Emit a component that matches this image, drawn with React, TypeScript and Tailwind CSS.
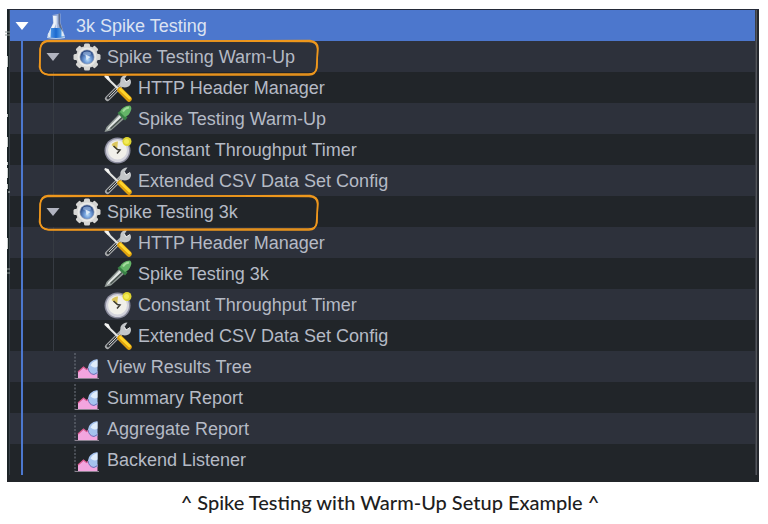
import React, { useState } from "react"

type IconName = "flask" | "gear" | "tools" | "dropper" | "clock" | "chart"

interface TreeNode {
  id: string
  label: string
  icon: IconName
  outlined?: boolean
  children?: TreeNode[]
}

interface FlatNode extends TreeNode {
  depth: number
}

const plan: TreeNode = {
  id: "plan",
  label: "3k Spike Testing",
  icon: "flask",
  children: [
    {
      id: "warmup",
      label: "Spike Testing Warm-Up",
      icon: "gear",
      outlined: true,
      children: [
        { id: "warmup-header", label: "HTTP Header Manager", icon: "tools" },
        { id: "warmup-sampler", label: "Spike Testing Warm-Up", icon: "dropper" },
        { id: "warmup-timer", label: "Constant Throughput Timer", icon: "clock" },
        { id: "warmup-csv", label: "Extended CSV Data Set Config", icon: "tools" }
      ]
    },
    {
      id: "spike",
      label: "Spike Testing 3k",
      icon: "gear",
      outlined: true,
      children: [
        { id: "spike-header", label: "HTTP Header Manager", icon: "tools" },
        { id: "spike-sampler", label: "Spike Testing 3k", icon: "dropper" },
        { id: "spike-timer", label: "Constant Throughput Timer", icon: "clock" },
        { id: "spike-csv", label: "Extended CSV Data Set Config", icon: "tools" }
      ]
    },
    { id: "tree", label: "View Results Tree", icon: "chart" },
    { id: "summary", label: "Summary Report", icon: "chart" },
    { id: "aggregate", label: "Aggregate Report", icon: "chart" },
    { id: "backend", label: "Backend Listener", icon: "chart" }
  ]
}

const indents = ["pl-0", "pl-[31px]", "pl-[62px]"]

function flatten(node: TreeNode, closed: string[], depth = 0): FlatNode[] {
  const rest = closed.includes(node.id) ? [] : node.children || []
  return [{ ...node, depth }, ...rest.flatMap((child) => flatten(child, closed, depth + 1))]
}

function FlaskIcon() {
  return (
    <svg viewBox="0 0 28 28" className="h-7 w-7">
      <defs>
        <linearGradient id="flask-liquid" x1="0" x2="1">
          <stop offset="0" stopColor="#63a9ee" />
          <stop offset="0.5" stopColor="#1b69cf" />
          <stop offset="1" stopColor="#6fb6f2" />
        </linearGradient>
      </defs>
      <path d="M10.500 3l8-1.500v9L23 24.500H5L11 11z" fill="#a9b9d9" opacity="0.85" />
      <path d="M11 4h3v8L9 23H5.500L11.500 11z" fill="#eef3fa" />
      <path d="M16.500 1.500h1.500v9l3 9-2 1-2.500-9z" fill="#5f6d8b" />
      <path d="M14.500 4v12" stroke="#cfdbee" strokeWidth="1.500" />
      <path d="M9 16h9.500L22 24.500q-7.500 3-16 0z" fill="url(#flask-liquid)" />
      <path d="M9 16l-3.500 8.500 3 1z M19.500 17l3 7-3 .5z" fill="#dfeaf6" />
      <path d="M5 24.500q9 3 18 0v1.500q-9 2-18 0z" fill="#b6cce8" />
    </svg>
  )
}

function GearIcon() {
  return (
    <svg viewBox="0 0 28 28" className="h-7 w-7">
      <defs>
        <radialGradient id="gear-core" cx="0.55" cy="0.7" r="0.65">
          <stop offset="0" stopColor="#b9dcf8" />
          <stop offset="0.4" stopColor="#6e9bd8" />
          <stop offset="1" stopColor="#23417c" />
        </radialGradient>
      </defs>
      <g fill="#d6d6d4">
        <circle cx="14" cy="14" r="11" />
        <rect x="11" y="0.500" width="6" height="27" rx="1.500" />
        <rect x="0.500" y="11" width="27" height="6" rx="1.500" />
        <rect x="11" y="0.500" width="6" height="27" rx="1.500" transform="rotate(45 14 14)" />
        <rect x="11" y="0.500" width="6" height="27" rx="1.500" transform="rotate(-45 14 14)" />
      </g>
      <circle cx="14" cy="14" r="9.500" fill="#e9e9e7" />
      <circle cx="14" cy="14" r="7.500" fill="#9ea9bd" />
      <circle cx="14" cy="14" r="6.800" fill="url(#gear-core)" />
      <ellipse cx="14" cy="10.500" rx="4" ry="2" fill="#93b0dc" opacity="0.7" />
      <path d="M12.500 11.500l5 2.500-4 3z" fill="#e9f3fc" opacity="0.85" />
    </svg>
  )
}

function ToolsIcon() {
  return (
    <svg viewBox="0 0 28 28" className="h-7 w-7">
      <path d="M3.500 24.500L19 9" stroke="#a9abad" strokeWidth="5" strokeLinecap="round" />
      <path d="M4 24L14 14" stroke="#33373b" strokeWidth="2.800" strokeLinecap="round" />
      <path d="M5 23L18 10" stroke="#c9cbcc" strokeWidth="1" />
      <path
        d="M16 11.500L16.500 5q2-4.500 7-4.500L20.500 5l1.500 3 4.500-2.500q1.500 4.500-2 7-3.500 1.500-6 .5z"
        fill="#c4c7c9"
      />
      <path d="M20.500 5l1.500 3 4-2.500" stroke="#f4f4f4" fill="none" />
      <path d="M1.500 2.500L15 15.500" stroke="#e2e3e1" strokeWidth="2.200" strokeLinecap="round" />
      <path d="M0.500 1l4 1 2 4-3-.5z" fill="#f6f6f4" />
      <path d="M16 16L25 25" stroke="#dfa10e" strokeWidth="5.500" strokeLinecap="round" />
      <path d="M16.500 15.500L25.500 24" stroke="#ffd52b" strokeWidth="2.800" strokeLinecap="round" />
    </svg>
  )
}

function DropperIcon() {
  return (
    <svg viewBox="0 0 28 28" className="h-7 w-7">
      <path d="M0.500 27l2-5L15.500 8.500l5 5L7 25.500z" fill="#8f9894" />
      <path d="M2.500 25.500l2-3.500L15.500 10.500l2 2L6 23z" fill="#e3e7e5" />
      <path d="M6.500 23.500L18 12.500" stroke="#49534f" strokeWidth="1.500" />
      <path d="M13.500 8l3-2.500 7 7-2.500 3z" fill="#398246" />
      <path d="M16 7q2-6 10-6.500 2.500 2 .5 6-1.500 4-5.500 5.500z" fill="#64b568" />
      <path d="M19 6.500q2-3.500 6-4" stroke="#a4dc9c" strokeWidth="2" fill="none" />
    </svg>
  )
}

function ClockIcon() {
  return (
    <svg viewBox="0 0 28 28" className="h-7 w-7">
      <circle cx="13.500" cy="14.500" r="13" fill="#8b8c9e" />
      <circle cx="13.500" cy="14.500" r="11.500" fill="#d3d3dc" />
      <circle cx="13.500" cy="14" r="9.500" fill="#f1f0ea" />
      <path d="M13 14L7.500 9q2-3.500 6.500-3.500z" fill="#dcc65c" />
      <path d="M9.500 10l4 3.500 2.500.5-3 3.500" stroke="#3c3b35" strokeWidth="1.500" fill="none" />
      <circle cx="23" cy="5.500" r="4.500" fill="#e0d530" />
      <circle cx="22.500" cy="5.500" r="2.500" fill="#f3ec58" />
    </svg>
  )
}

function ChartIcon() {
  return (
    <svg viewBox="0 0 28 28" className="h-7 w-7">
      <path d="M2 0v26" stroke="#747a84" strokeDasharray="2 1.500" />
      <path d="M2 25.500h24" stroke="#8d8391" />
      <path d="M5 25v-6l5.500-5 3 2.500 4-3 7 5V25z" fill="#f3a5df" />
      <path d="M5 19l5.500-5 3 2.500 3-2" stroke="#d9598f" strokeWidth="1.200" fill="none" />
      <path d="M15 14.500q.5-7 9.500-8.500v14.500q-1 1.500-4 .5-5-1-5.500-6.500z" fill="#a5c2ee" />
      <path d="M17.500 12.500q1.500-4 7-5.500v6.500q-3 2.500-7-1z" fill="#e0edfb" />
      <path d="M15 15q1 6 6 6.500l3.500-2" stroke="#6b6fb8" fill="none" />
    </svg>
  )
}

const icons: Record<IconName, () => React.JSX.Element> = {
  flask: FlaskIcon,
  gear: GearIcon,
  tools: ToolsIcon,
  dropper: DropperIcon,
  clock: ClockIcon,
  chart: ChartIcon
}

// Hand drawn frame around a thread group
function Outline() {
  return (
    <svg
      viewBox="0 0 282 38"
      fill="none"
      stroke="#ee971d"
      className="pointer-events-none absolute -top-0.5 left-7 z-10 h-[38px] w-[282px]"
    >
      <path
        d="M10 1.500L270 2.500Q279 2 279.500 10L279 29Q278 35 270 35L10 35.500Q2 35 2 27V10Q3 2 10 1.500"
        strokeWidth="1.500"
      />
      <path
        d="M8 2.500L272 1.500Q280 3 280 9L278.500 28Q278 36 271 36L11 36Q3 35 1.500 28L2.500 9Q3 3 12 2"
        strokeWidth="1.500"
      />
    </svg>
  )
}

interface TreeRowProps {
  node: FlatNode
  open: boolean
  onToggle: (id: string) => void
}

function TreeRow({ node, open, onToggle }: TreeRowProps) {
  const Icon = icons[node.icon]
  const isRoot = node.depth === 0

  return (
    <li
      role="treeitem"
      aria-level={node.depth + 1}
      aria-selected={isRoot}
      className={`relative flex h-[31px] items-center ${indents[node.depth]} ${
        isRoot ? "bg-[#4c77cd] text-[#dce3f2]" : "text-[#b5bac5] odd:bg-[#212529] even:bg-[#2d313b]"
      }`}
    >
      {!isRoot && <span className="absolute inset-y-0 left-[11px] w-0.5 bg-[#4c78cf]" />}
      {node.depth === 2 && <span className="absolute inset-y-0 left-[43px] w-px bg-[#363b42]" />}
      {node.children ? (
        <button
          type="button"
          aria-label={`Toggle ${node.label}`}
          aria-expanded={open}
          onClick={() => onToggle(node.id)}
          className="mr-2 flex w-6 justify-center"
        >
          <svg viewBox="0 0 14 8" className={`h-2 w-3.5 ${open ? "" : "-rotate-90"}`}>
            <path d="M0.500 0h13L7 8z" fill={isRoot ? "#ffffff" : "#b1b4c0"} />
          </svg>
        </button>
      ) : (
        <span className="mr-2 w-6" />
      )}
      <Icon />
      <span className="ml-1.5 whitespace-nowrap">{node.label}</span>
      {node.outlined && <Outline />}
    </li>
  )
}

export default function App() {
  const [closed, setClosed] = useState<string[]>([])

  const toggle = (id: string) =>
    setClosed((ids) => (ids.includes(id) ? ids.filter((item) => item !== id) : [...ids, id]))

  return (
    <main className="min-h-screen bg-white pt-[9px] pr-[9px] pl-[7px]">
      <div className="relative flex border-t border-[#242a38] bg-[#212529] pb-[7px]">
        <div className="w-[3px] border-r border-[#394047] bg-[#1b2427]" />
        {/* clipped edge of the window behind */}
        <svg viewBox="0 0 5 300" className="absolute top-0 -left-0.5 h-[300px] w-[5px]">
          <path d="M0 22h5M0 25h5M2 259h3M2 263h3" stroke="#8d9795" />
          <path
            d="M2.500 46v11M2.500 104v3M2.500 127v10M2.500 152v3M2.500 158v10M2.500 174v5M4 181v2M2.500 228v11"
            stroke="#c8cdcc"
          />
        </svg>
        <ul
          role="tree"
          aria-label="Test plan"
          className="flex-1 font-['Liberation_Sans',Arial,sans-serif] text-[18px] leading-6"
        >
          {flatten(plan, closed).map((node) => (
            <TreeRow key={node.id} node={node} open={!closed.includes(node.id)} onToggle={toggle} />
          ))}
        </ul>
        <div className="w-1 border-r-2 border-l border-r-[#24272d] border-l-[#3a3d45] bg-[#53565b]" />
      </div>
      <p className="mt-1.5 ml-3.5 text-center font-['Excalifont','Comic_Sans_MS','Lato',sans-serif] text-[20px] leading-7 font-medium text-[#1e1e1e]">
        ^ Spike Testing with Warm-Up Setup Example ^
      </p>
    </main>
  )
}
